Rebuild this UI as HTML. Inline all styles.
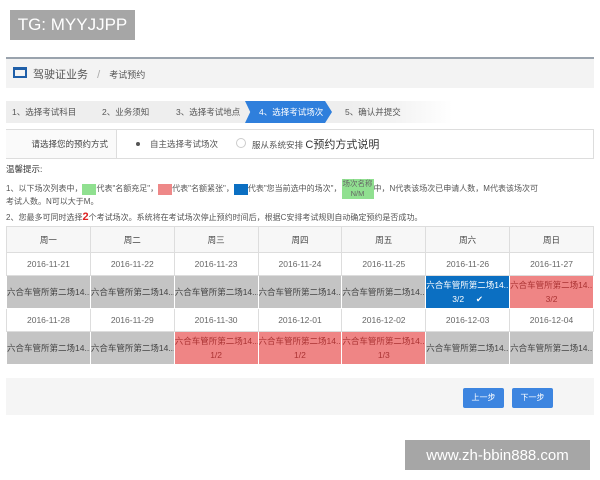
<!DOCTYPE html>
<html><head><meta charset="utf-8"><style>
*{margin:0;padding:0;box-sizing:border-box}
body{width:600px;height:480px;background:#fff;position:relative;overflow:hidden;font-family:"Liberation Sans","Noto Sans CJK SC",sans-serif;color:#555;font-size:9px}
.abs{position:absolute;white-space:nowrap}
.wm{background:#a6a6a6;color:#fff;font-family:"Liberation Sans","DejaVu Sans",sans-serif;display:flex;align-items:center;justify-content:center}
table{border-collapse:collapse;position:absolute;left:6px;top:226px;width:588px;table-layout:fixed}
td{border:1px solid #ddd;text-align:center;font-size:8.5px;color:#666;overflow:hidden;white-space:nowrap}
tr.h td{height:26px;background:#f7f7f7;color:#444}
tr.d td{height:23px;background:#fff}
tr.c td{height:33px;background:#c4c4c4;color:#444;line-height:14px;border-color:#fff}
td.r{background:#ef8585!important;color:#a33!important}
td.b{background:#0b6fc2!important;color:#fff!important}
.sw{display:inline-block;width:14px;height:11px;vertical-align:middle}
</style></head><body>
<div class="abs wm" style="left:10px;top:10px;width:125px;height:30px;font-size:17px">TG: MYYJJPP</div>
<div class="abs" style="left:6px;top:57px;width:588px;height:2px;background:#9aa3ad"></div>
<div class="abs" style="left:6px;top:59px;width:588px;height:29px;background:#f3f3f3"></div>
<div class="abs" style="left:13px;top:67px;width:14px;height:11px;border:2px solid #1f5fa8;border-top-width:3px"></div>
<div class="abs" style="left:33px;top:66px;font-size:11px;color:#555">驾驶证业务 <span style="color:#aaa;margin:0 6px">/</span> <span style="font-size:9px">考试预约</span></div>
<div class="abs" style="left:6px;top:101px;width:588px;height:22px;background:linear-gradient(90deg,#eee 58%,#f3f3f3 66%,#fff 76%)"></div>
<div class="abs" style="left:6px;top:101px;height:22px;width:400px;font-size:8.5px;color:#555;line-height:22px">
<span class="abs" style="left:6px">1、选择考试科目</span>
<span class="abs" style="left:96px">2、业务须知</span>
<span class="abs" style="left:170px">3、选择考试地点</span>
<span class="abs" style="left:239px;width:87px;height:22px;background:#2f7fdc;color:#fff;clip-path:polygon(0 0,92% 0,100% 50%,92% 100%,0 100%,6% 50%);padding-left:14px">4、选择考试场次</span>
<span class="abs" style="left:339px">5、确认并提交</span>
</div>
<div class="abs" style="left:6px;top:129px;width:588px;height:30px;border:1px solid #ddd"></div>
<div class="abs" style="left:6px;top:130px;width:111px;height:28px;border-right:1px solid #ddd;background:#fafafa;text-align:right;padding-right:8px;line-height:28px;font-size:8.5px;color:#444">请选择您的预约方式</div>
<div class="abs" style="left:136px;top:142px;width:4px;height:4px;border-radius:50%;background:#555"></div>
<div class="abs" style="left:150px;top:138px;font-size:8.5px">自主选择考试场次</div>
<div class="abs" style="left:236px;top:138px;width:10px;height:10px;border:1px solid #ccc;border-radius:50%"></div>
<div class="abs" style="left:252px;top:136px;font-size:8.5px">服从系统安排 <span style="font-size:11px;color:#333">C预约方式说明</span></div>
<div class="abs" style="left:6px;top:163px;font-size:8.5px;color:#333">温馨提示:</div>
<div class="abs" style="left:6px;top:179px;font-size:8px">1、以下场次列表中，<span class="sw" style="background:#90e090"></span>代表"名额充足"，<span class="sw" style="background:#ee8888"></span>代表"名额紧张"，<span class="sw" style="background:#0b6fc2"></span>代表"您当前选中的场次"，<span style="display:inline-block;background:#90e090;color:#666;text-align:center;line-height:10px;width:32px;vertical-align:middle;font-size:7.5px">场次名称<br>N/M</span>中，N代表该场次已申请人数，M代表该场次可</div>
<div class="abs" style="left:6px;top:196px;font-size:8px">考试人数。N可以大于M。</div>
<div class="abs" style="left:6px;top:211px;font-size:8px">2、您最多可同时选择<b style="color:#d22;font-size:11px">2</b>个考试场次。系统将在考试场次停止预约时间后，根据C安排考试规则自动确定预约是否成功。</div>
<table>
<tr class="h"><td>周一</td><td>周二</td><td>周三</td><td>周四</td><td>周五</td><td>周六</td><td>周日</td></tr>
<tr class="d"><td>2016-11-21</td><td>2016-11-22</td><td>2016-11-23</td><td>2016-11-24</td><td>2016-11-25</td><td>2016-11-26</td><td>2016-11-27</td></tr>
<tr class="c"><td>六合车管所第二场14...</td><td>六合车管所第二场14...</td><td>六合车管所第二场14...</td><td>六合车管所第二场14...</td><td>六合车管所第二场14...</td><td class="b">六合车管所第二场14...<br>3/2 &nbsp; &nbsp; ✔</td><td class="r">六合车管所第二场14...<br>3/2</td></tr>
<tr class="d"><td>2016-11-28</td><td>2016-11-29</td><td>2016-11-30</td><td>2016-12-01</td><td>2016-12-02</td><td>2016-12-03</td><td>2016-12-04</td></tr>
<tr class="c"><td>六合车管所第二场14...</td><td>六合车管所第二场14...</td><td class="r">六合车管所第二场14...<br>1/2</td><td class="r">六合车管所第二场14...<br>1/2</td><td class="r">六合车管所第二场14...<br>1/3</td><td>六合车管所第二场14...</td><td>六合车管所第二场14...</td></tr>
</table>
<div class="abs" style="left:6px;top:378px;width:588px;height:37px;background:#f5f5f5"></div>
<div class="abs" style="left:463px;top:388px;width:41px;height:20px;background:#3d85e0;border-radius:2px;color:#fff;font-size:8px;text-align:center;line-height:20px">上一步</div>
<div class="abs" style="left:512px;top:388px;width:41px;height:20px;background:#3d85e0;border-radius:2px;color:#fff;font-size:8px;text-align:center;line-height:20px">下一步</div>
<div class="abs wm" style="left:405px;top:440px;width:185px;height:30px;font-size:15px">www.zh-bbin888.com</div>
</body></html>
